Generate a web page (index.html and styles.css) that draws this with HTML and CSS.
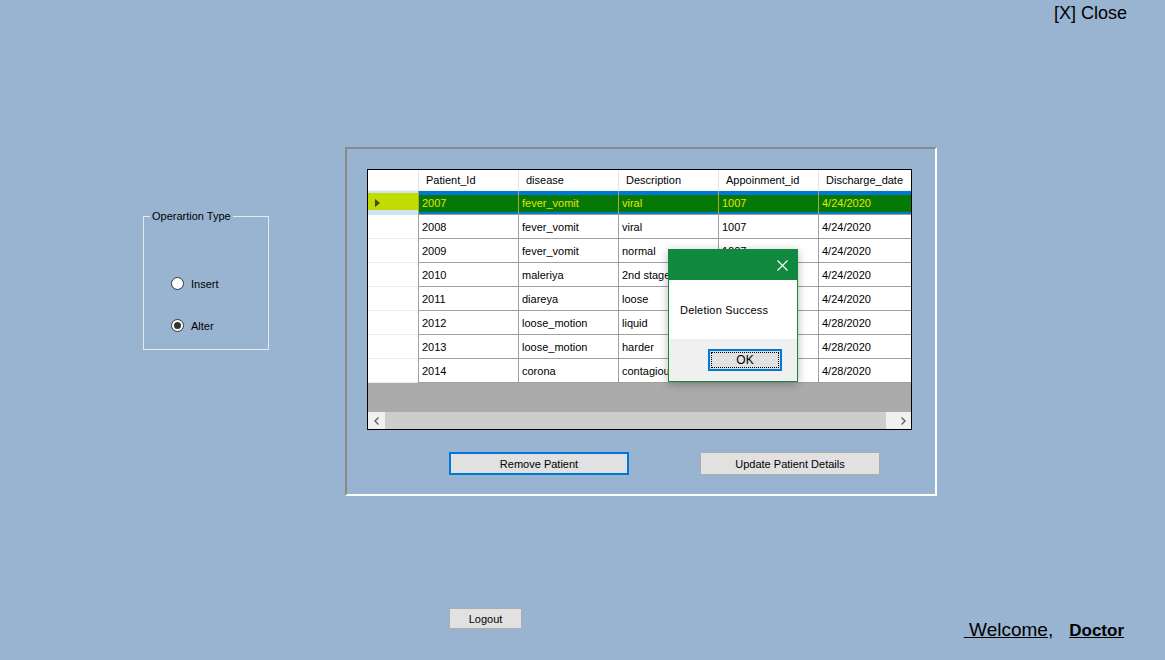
FILE: index.html
```html
<!DOCTYPE html>
<html>
<head>
<meta charset="utf-8">
<title>Patient Details</title>
<link rel="stylesheet" href="styles.css">
</head>
<body>
<div class="form">
  <div class="topbar"><span class="close-link">[X] Close</span></div>

  <div class="main">
    <fieldset class="optype">
      <legend>Operartion Type</legend>
      <div class="optype-body">
        <div class="radio"><span class="radio-dot"></span><span>Insert</span></div>
        <div class="radio radio-checked"><span class="radio-dot"></span><span>Alter</span></div>
      </div>
    </fieldset>

    <div class="panel">
      <div class="grid">
        <div class="row row-head">
          <div class="rh"></div>
          <div class="c">Patient_Id</div>
          <div class="c">disease</div>
          <div class="c">Description</div>
          <div class="c">Appoinment_id</div>
          <div class="c">Discharge_date</div>
        </div>
        <div class="row row-sel">
          <div class="rh"><span class="tri"></span></div>
          <div class="c">2007</div>
          <div class="c">fever_vomit</div>
          <div class="c">viral</div>
          <div class="c">1007</div>
          <div class="c">4/24/2020</div>
        </div>
        <div class="row">
          <div class="rh"></div>
          <div class="c">2008</div>
          <div class="c">fever_vomit</div>
          <div class="c">viral</div>
          <div class="c">1007</div>
          <div class="c">4/24/2020</div>
        </div>
        <div class="row">
          <div class="rh"></div>
          <div class="c">2009</div>
          <div class="c">fever_vomit</div>
          <div class="c">normal</div>
          <div class="c">1007</div>
          <div class="c">4/24/2020</div>
        </div>
        <div class="row">
          <div class="rh"></div>
          <div class="c">2010</div>
          <div class="c">maleriya</div>
          <div class="c">2nd stage</div>
          <div class="c"></div>
          <div class="c">4/24/2020</div>
        </div>
        <div class="row">
          <div class="rh"></div>
          <div class="c">2011</div>
          <div class="c">diareya</div>
          <div class="c">loose</div>
          <div class="c"></div>
          <div class="c">4/24/2020</div>
        </div>
        <div class="row">
          <div class="rh"></div>
          <div class="c">2012</div>
          <div class="c">loose_motion</div>
          <div class="c">liquid</div>
          <div class="c"></div>
          <div class="c">4/28/2020</div>
        </div>
        <div class="row">
          <div class="rh"></div>
          <div class="c">2013</div>
          <div class="c">loose_motion</div>
          <div class="c">harder</div>
          <div class="c"></div>
          <div class="c">4/28/2020</div>
        </div>
        <div class="row">
          <div class="rh"></div>
          <div class="c">2014</div>
          <div class="c">corona</div>
          <div class="c">contagious</div>
          <div class="c"></div>
          <div class="c">4/28/2020</div>
        </div>
        <div class="grid-empty"></div>
        <div class="hscroll">
          <div class="sb-btn">
            <svg width="8" height="8" viewBox="0 0 8 8"><polyline points="5.5,0.5 2,4 5.5,7.5" fill="none" stroke="#606060" stroke-width="1.4"/></svg>
          </div>
          <div class="sb-thumb"></div>
          <div class="sb-track"></div>
          <div class="sb-btn">
            <svg width="8" height="8" viewBox="0 0 8 8"><polyline points="2.5,0.5 6,4 2.5,7.5" fill="none" stroke="#606060" stroke-width="1.4"/></svg>
          </div>
        </div>
      </div>

      <div class="actions">
        <div class="btn btn-focus btn-remove">Remove Patient</div>
        <div class="btn btn-update">Update Patient Details</div>
      </div>

      <div class="dialog">
        <div class="dialog-title">
          <svg width="11" height="11" viewBox="0 0 11 11"><path d="M0.5 0.5 L10.5 10.5 M10.5 0.5 L0.5 10.5" stroke="#fff" stroke-width="1.1" fill="none"/></svg>
        </div>
        <div class="dialog-body">Deletion Success</div>
        <div class="dialog-foot">
          <div class="ok-btn"><span class="ok-focus">OK</span></div>
        </div>
      </div>
    </div>
  </div>

  <div class="bottom">
    <div class="btn btn-logout">Logout</div>
    <div class="welcome">
      <span class="welcome-text">&nbsp;Welcome,</span><span class="welcome-name">Doctor</span>
    </div>
  </div>
</div>
</body>
</html>
```

FILE: styles.css
```css
html, body {
  margin: 0;
  padding: 0;
}

body {
  background: #99b4d1;
  font-family: "Liberation Sans", Arial, sans-serif;
  color: #000;
}

.form {
  width: 1165px;
  height: 660px;
  overflow: hidden;
  background: #99b4d1;
}

/* top bar */
.topbar {
  height: 30px;
  box-sizing: border-box;
  display: flex;
  justify-content: flex-end;
  padding: 3px 38px 0 0;
}

.close-link {
  font-size: 18px;
  line-height: 20px;
  color: #000;
}

/* main row */
.main {
  display: flex;
  align-items: flex-start;
  margin-top: 117px;
}

/* group box */
.optype {
  margin: 63px 0 0 143px;
  padding: 0;
  width: 126px;
  box-sizing: border-box;
  border: 1px solid #e6e9ee;
  min-width: 0;
}

.optype legend {
  font-size: 11px;
  line-height: 13px;
  padding: 0 2px;
  margin-left: 6px;
  color: #000;
}

.optype-body {
  height: 126px;
  padding-left: 27px;
  box-sizing: border-box;
  display: flex;
  flex-direction: column;
}

.radio {
  display: flex;
  align-items: center;
  gap: 7px;
  height: 13px;
  font-size: 11px;
  margin-top: 54px;
}

.radio + .radio {
  margin-top: 29px;
}

.radio-dot {
  width: 13px;
  height: 13px;
  box-sizing: border-box;
  border: 1px solid #333;
  border-radius: 50%;
  background: #fff;
  display: flex;
  align-items: center;
  justify-content: center;
}

.radio-checked .radio-dot::after {
  content: "";
  width: 7px;
  height: 7px;
  border-radius: 50%;
  background: #333;
}

/* panel */
.panel {
  position: relative;
  margin-left: 76px;
  width: 592px;
  height: 349px;
  box-sizing: border-box;
  border: 2px solid;
  border-color: #8a8a8a #ffffff #ffffff #8a8a8a;
  padding: 20px 0 0 20px;
}

/* data grid */
.grid {
  width: 545px;
  height: 261px;
  box-sizing: border-box;
  border: 1px solid #000;
  background: #ababab;
  display: flex;
  flex-direction: column;
  font-size: 11px;
}

.row {
  display: grid;
  grid-template-columns: 50px 100px 100px 100px 100px 93px;
  height: 24px;
}

.row .rh {
  background: #fff;
  border-bottom: 1px solid #ececec;
  box-sizing: border-box;
  position: relative;
}

.row .c {
  background: #fff;
  box-sizing: border-box;
  border-left: 1px solid #a0a0a0;
  border-bottom: 1px solid #a0a0a0;
  padding-left: 3px;
  display: flex;
  align-items: center;
  white-space: nowrap;
  overflow: hidden;
}

.row-head {
  height: 21px;
}

.row-head .rh {
  border-bottom: 1px solid #f0f0f0;
}

.row-head .c {
  border-left: 1px solid #e3e3e3;
  border-bottom: 1px solid #f0f0f0;
  padding-left: 7px;
}

/* selected (scribbled) row */
.row-sel .c {
  background: linear-gradient(to bottom, #0078d7 0, #0078d7 4px, #067806 4px, #067806 21px, #0078d7 21px);
  color: #e6e600;
  border-left-color: #a8a83a;
  border-bottom-color: #a0a0a0;
}

.row-sel .rh {
  background: linear-gradient(to bottom, #cfe3f5 0, #cfe3f5 2px, #c0dc00 2px, #c0dc00 19px, #cfe3f5 19px);
  border-bottom-color: #cfe3f5;
}

.tri {
  position: absolute;
  left: 7px;
  top: 8px;
  width: 0;
  height: 0;
  border-top: 4px solid transparent;
  border-bottom: 4px solid transparent;
  border-left: 5px solid #4b4200;
}

.grid-empty {
  flex: 1;
}

.hscroll {
  height: 17px;
  display: flex;
  background: #f0f0f0;
}

.sb-btn {
  width: 17px;
  height: 17px;
  display: flex;
  align-items: center;
  justify-content: center;
  background: #f0f0f0;
}

.sb-thumb {
  width: 501px;
  background: #cdcdcd;
}

.sb-track {
  flex: 1;
  background: #f0f0f0;
}

/* buttons */
.actions {
  display: flex;
  margin-top: 22px;
}

.btn {
  height: 23px;
  box-sizing: border-box;
  background: #e1e1e1;
  border: 1px solid #adadad;
  font-size: 11px;
  display: flex;
  align-items: center;
  justify-content: center;
  color: #000;
}

.btn-focus {
  border: 2px solid #0078d7;
}

.btn-remove {
  width: 180px;
  margin-left: 82px;
}

.btn-update {
  width: 180px;
  margin-left: 71px;
}

/* message box */
.dialog {
  position: absolute;
  left: 321px;
  top: 100px;
  width: 130px;
  height: 133px;
  box-sizing: border-box;
  border: 1px solid #10893e;
  background: #fff;
  box-shadow: 0 2px 9px rgba(0, 0, 0, 0.28);
  display: flex;
  flex-direction: column;
}

.dialog-title {
  height: 30px;
  background: #10893e;
  display: flex;
  align-items: center;
  justify-content: flex-end;
  padding-right: 9px;
}

.dialog-body {
  height: 59px;
  display: flex;
  align-items: center;
  padding-left: 11px;
  font-size: 11px;
  letter-spacing: 0.2px;
}

.dialog-foot {
  flex: 1;
  background: #f0f0f0;
  padding: 10px 0 0 39px;
}

.ok-btn {
  width: 74px;
  height: 22px;
  box-sizing: border-box;
  border: 2px solid #0078d7;
  background: #e1e1e1;
  padding: 1px;
  display: flex;
}

.ok-focus {
  flex: 1;
  border: 1px dotted #000;
  display: flex;
  align-items: center;
  justify-content: center;
  font-size: 12px;
}

/* bottom */
.bottom {
  display: flex;
  align-items: flex-start;
  margin-top: 112px;
}

.btn-logout {
  width: 73px;
  height: 21px;
  margin-left: 449px;
}

.welcome {
  margin-left: auto;
  margin-right: 41px;
  margin-top: 11px;
  line-height: 22px;
  white-space: nowrap;
}

.welcome-text {
  font-size: 19px;
  text-decoration: underline;
}

.welcome-name {
  font-size: 17px;
  font-weight: bold;
  text-decoration: underline;
  margin-left: 16px;
}
```
